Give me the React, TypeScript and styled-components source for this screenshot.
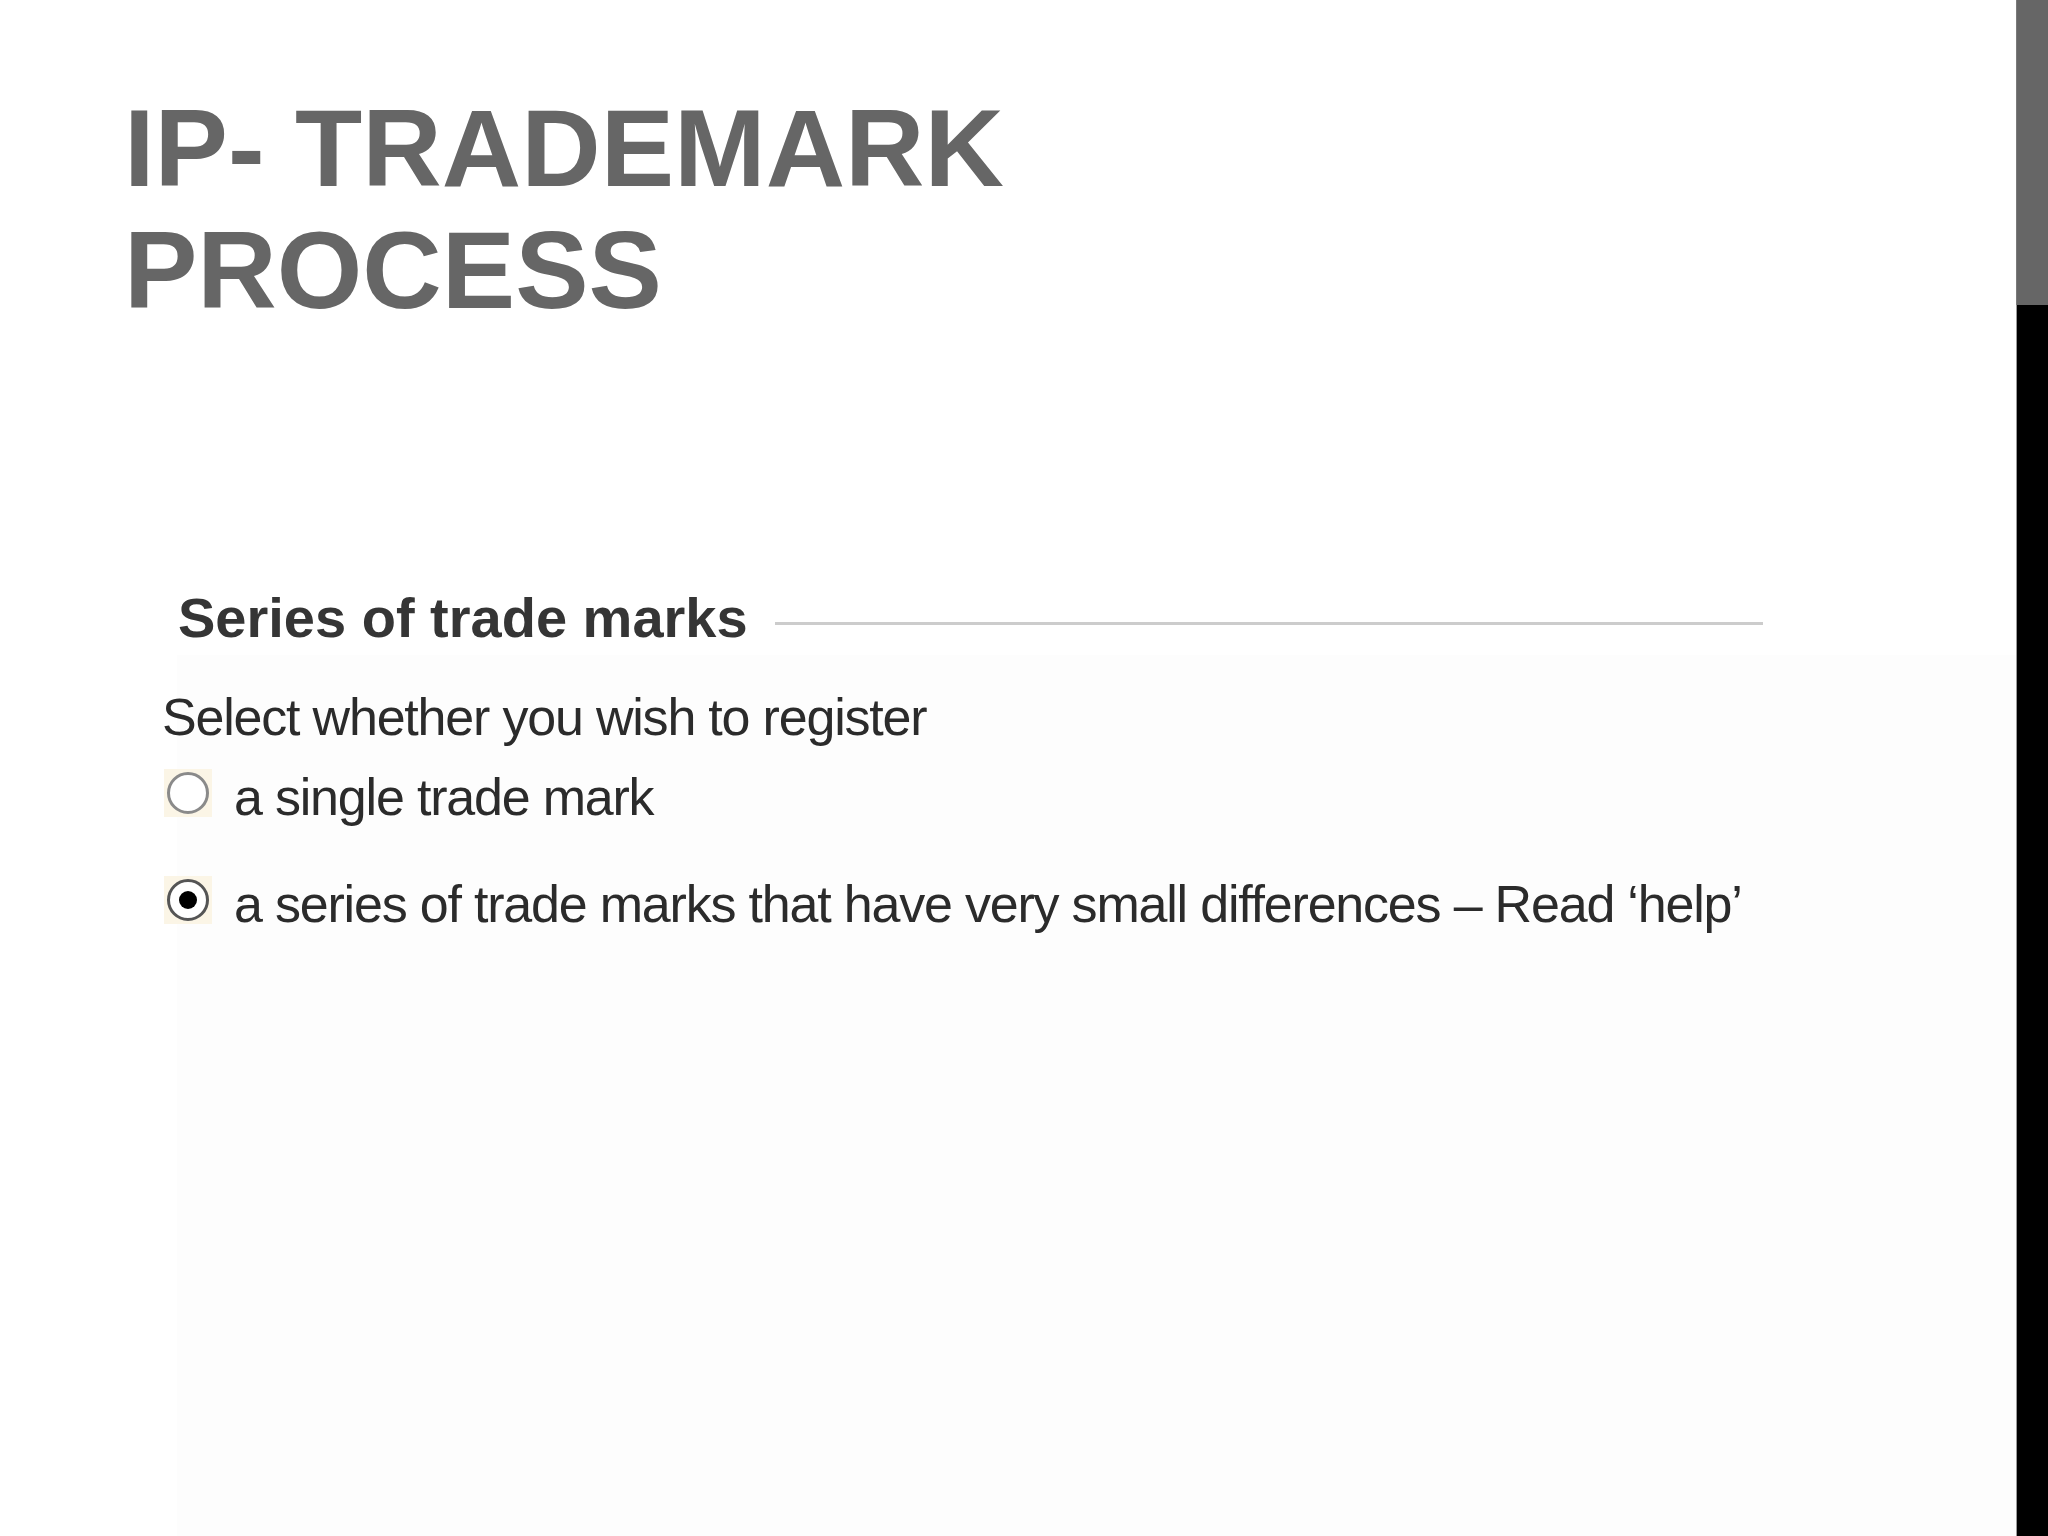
import styled, { createGlobalStyle } from "styled-components";

const GlobalStyle = createGlobalStyle`
  html, body {
    margin: 0;
    padding: 0;
    background: #ffffff;
  }
`;

const App = () => {
  return (
    <>
      <GlobalStyle />
      <Slide>
        <Main>
          <Title>
            IP- Trademark
            <br />
            Process
          </Title>
          <FormShot>
            <Legend>
              <LegendText>Series of trade marks</LegendText>
              <Rule />
            </Legend>
            <FormBody>
              <Prompt>Select whether you wish to register</Prompt>
              <Option $gap={20}>
                <RadioBox>
                  <Radio $checked={false} />
                </RadioBox>
                <OptionText>a single trade mark</OptionText>
              </Option>
              <Option $gap={47}>
                <RadioBox>
                  <Radio $checked={true} />
                </RadioBox>
                <OptionText>
                  a series of trade marks that have very small differences – Read ‘help’
                </OptionText>
              </Option>
            </FormBody>
          </FormShot>
        </Main>
        <SideBar>
          <SideTop />
          <SideBottom />
        </SideBar>
      </Slide>
    </>
  );
};

export default App;

const Slide = styled.div`
  width: 2048px;
  height: 1536px;
  display: flex;
  background: #ffffff;
  overflow: hidden;
`;

const Main = styled.div`
  flex: 1;
  display: flex;
  flex-direction: column;
  padding-top: 87px;
`;

const Title = styled.h1`
  margin: 0;
  padding-left: 124px;
  font-family: "Liberation Sans", Arial, sans-serif;
  font-weight: 700;
  font-size: 110px;
  line-height: 122px;
  text-transform: uppercase;
  color: #666666;
`;

const FormShot = styled.div`
  flex: 1;
  display: flex;
  flex-direction: column;
  margin-top: 255px;
  margin-left: 150px;
  font-family: "Liberation Sans", Arial, sans-serif;
`;

const Legend = styled.div`
  display: flex;
  align-items: center;
  gap: 27px;
  padding-left: 28px;
`;

const LegendText = styled.span`
  font-weight: 700;
  font-size: 56px;
  line-height: 64px;
  color: #353535;
  white-space: nowrap;
`;

const Rule = styled.div`
  width: 988px;
  height: 3px;
  margin-top: 10px;
  background: #cccccc;
`;

const FormBody = styled.div`
  flex: 1;
  margin-top: 5px;
  margin-left: 27px;
  padding-top: 32px;
  background: #fdfdfd;
`;

const Prompt = styled.div`
  margin-left: -15px;
  font-size: 52px;
  line-height: 60px;
  letter-spacing: -1.2px;
  color: #2b2b2b;
`;

const Option = styled.div<{ $gap: number }>`
  display: flex;
  align-items: flex-start;
  gap: 22px;
  margin-top: ${(p) => p.$gap}px;
  margin-left: -13px;
`;

const RadioBox = styled.span`
  width: 48px;
  height: 48px;
  margin-top: 2px;
  display: flex;
  align-items: center;
  justify-content: center;
  background: #fbf5e6;
`;

const Radio = styled.span<{ $checked: boolean }>`
  box-sizing: border-box;
  width: 42px;
  height: 42px;
  border-radius: 50%;
  border: 3px solid ${(p) => (p.$checked ? "#555555" : "#8a8a8a")};
  background: #ffffff;
  display: flex;
  align-items: center;
  justify-content: center;

  &::after {
    content: "";
    display: ${(p) => (p.$checked ? "block" : "none")};
    width: 18px;
    height: 18px;
    border-radius: 50%;
    background: #000000;
  }
`;

const OptionText = styled.span`
  font-size: 52px;
  line-height: 60px;
  letter-spacing: -1.2px;
  color: #2b2b2b;
  white-space: nowrap;
`;

const SideBar = styled.div`
  width: 32px;
  display: flex;
  flex-direction: column;
`;

const SideTop = styled.div`
  height: 305px;
  background: #666666;
  border-left: 1px solid #7a7a7a;
`;

const SideBottom = styled.div`
  flex: 1;
  background: #000000;
  border-left: 1px solid #9a9a9a;
`;
